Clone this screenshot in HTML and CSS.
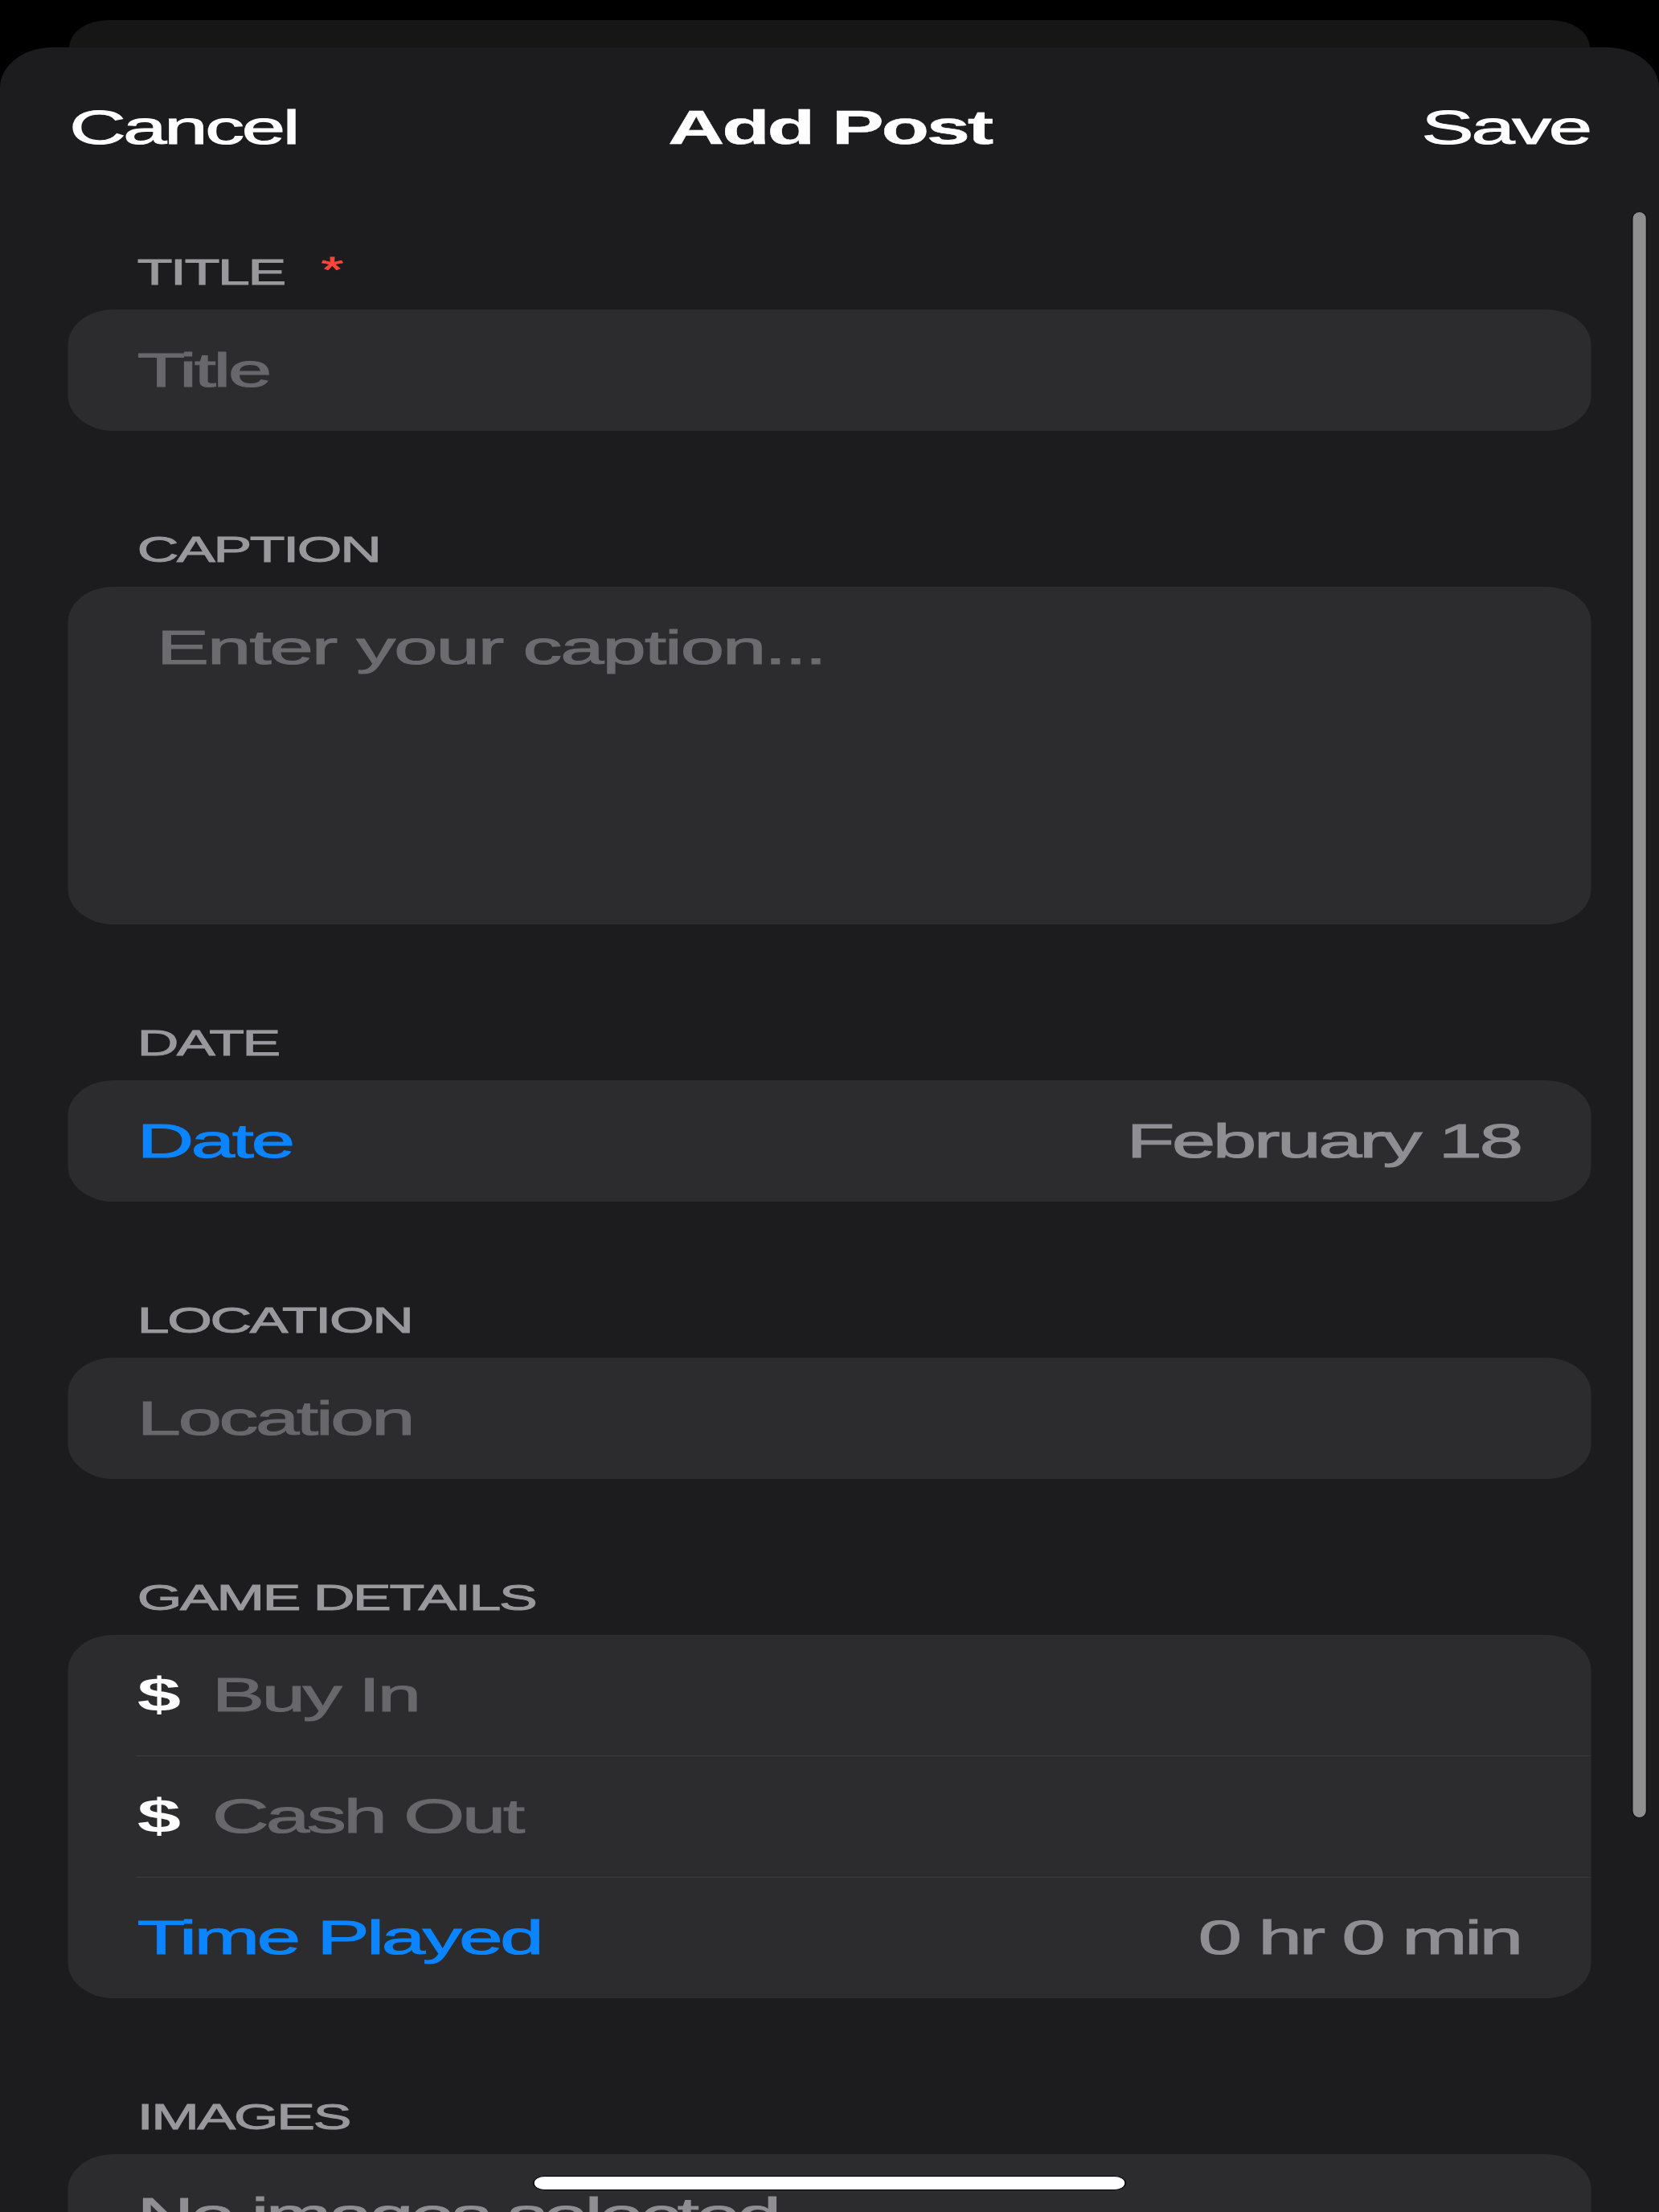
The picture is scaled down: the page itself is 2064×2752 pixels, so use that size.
FILE: index.html
```html
<!DOCTYPE html>
<html lang="en">
<head>
    <meta charset="UTF-8">
    <meta name="viewport" content="width=device-width, initial-scale=1.0">
    <title>Add Post</title>
    <link rel="stylesheet" href="styles.css">
</head>
<body>
    <div class="screen">
        <div class="peek"></div>

        <div class="sheet">
            <header class="nav">
                <span class="nav-btn nav-left">Cancel</span>
                <span class="nav-title">Add Post</span>
                <span class="nav-btn nav-right">Save</span>
            </header>

            <main class="form">
                <section class="group">
                    <div class="group-label">TITLE<span class="required">*</span></div>
                    <div class="field"><span class="placeholder">Title</span></div>
                </section>

                <section class="group">
                    <div class="group-label">CAPTION</div>
                    <div class="field field-caption"><span class="placeholder caption-placeholder">Enter your caption...</span></div>
                </section>

                <section class="group">
                    <div class="group-label">DATE</div>
                    <div class="field field-split">
                        <span class="link">Date</span>
                        <span class="value">February 18</span>
                    </div>
                </section>

                <section class="group">
                    <div class="group-label">LOCATION</div>
                    <div class="field"><span class="placeholder">Location</span></div>
                </section>

                <section class="group">
                    <div class="group-label">GAME DETAILS</div>
                    <div class="rows">
                        <div class="row">
                            <span class="currency">$</span>
                            <span class="placeholder">Buy In</span>
                        </div>
                        <div class="sep"></div>
                        <div class="row">
                            <span class="currency">$</span>
                            <span class="placeholder">Cash Out</span>
                        </div>
                        <div class="sep"></div>
                        <div class="row field-split">
                            <span class="link">Time Played</span>
                            <span class="value">0 hr 0 min</span>
                        </div>
                    </div>
                </section>

                <section class="group">
                    <div class="group-label">IMAGES</div>
                    <div class="field"><span class="value">No images selected</span></div>
                </section>
            </main>
        </div>

        <div class="scroll-thumb"></div>
        <div class="home-bar"></div>
    </div>
</body>
</html>
```

FILE: styles.css
```css
body {
    margin: 0;
    width: 2064px;
    height: 2752px;
    overflow: hidden;
    background-color: #000000;
    font-family: "Liberation Sans", Arial, sans-serif;
}

/* screen is laid out at device width, then stretched to the capture size */
.screen {
    position: relative;
    width: 1270px;
    height: 2752px;
    padding-top: 25px;
    box-sizing: border-box;
    transform: scaleX(1.6252);
    transform-origin: 0 0;
}

.peek {
    height: 34px;
    margin: 0 53px;
    background-color: #161617;
    border-radius: 30px 30px 0 0 / 34px 34px 0 0;
}

.sheet {
    height: 2693px;
    overflow: hidden;
    background-color: #1c1c1e;
    border-radius: 40px 40px 0 0 / 50px 50px 0 0;
}

.nav {
    display: grid;
    grid-template-columns: 1fr auto 1fr;
    align-items: center;
    padding: 70px 53px 0;
    font-size: 60px;
    line-height: 60px;
    letter-spacing: -2px;
    color: #ffffff;
    -webkit-text-stroke: 1px #ffffff;
}

.nav-left {
    justify-self: start;
}

.nav-right {
    justify-self: end;
}

.nav-title {
    font-weight: 700;
    -webkit-text-stroke: 0.4px #ffffff;
}

.form {
    padding: 128px 52px 0;
}

.group + .group {
    margin-top: 126px;
}

.group-label {
    padding-left: 53px;
    margin-bottom: 25px;
    font-size: 44px;
    line-height: 43px;
    letter-spacing: -1.4px;
    color: #98989d;
    -webkit-text-stroke: 1px #98989d;
}

.required {
    position: relative;
    top: -3px;
    margin-left: 28px;
    color: #ff453a;
    -webkit-text-stroke: 0.8px #ff453a;
}

.field {
    height: 151px;
    box-sizing: border-box;
    display: flex;
    align-items: center;
    padding: 0 54px 0 53px;
    background-color: #2c2c2e;
    border-radius: 35px / 44px;
    font-size: 60px;
    line-height: 60px;
    letter-spacing: -2px;
}

.field-caption {
    height: 420px;
    align-items: flex-start;
    padding-top: 46px;
    padding-left: 68px;
}

.field-split {
    justify-content: space-between;
}

.placeholder {
    color: #67676c;
    -webkit-text-stroke: 1.1px #67676c;
}

.caption-placeholder {
    letter-spacing: -1.2px;
    color: #6b6b70;
    -webkit-text-stroke: 1.1px #6b6b70;
}

.link {
    color: #0a84ff;
    -webkit-text-stroke: 1.1px #0a84ff;
}

.value {
    color: #8e8e93;
    -webkit-text-stroke: 1.1px #8e8e93;
}

.rows {
    background-color: #2c2c2e;
    border-radius: 35px / 44px;
    font-size: 60px;
    line-height: 60px;
    letter-spacing: -2px;
}

.row {
    height: 150px;
    display: flex;
    align-items: center;
    padding: 0 54px 0 53px;
}

.sep {
    height: 1px;
    margin-left: 52px;
    background-color: #3a3a3d;
}

.currency {
    margin-right: 26px;
    font-weight: 700;
    color: #ffffff;
}

.scroll-thumb {
    position: absolute;
    top: 263px;
    left: 1249px;
    width: 12px;
    height: 1999px;
    box-sizing: border-box;
    background-color: #8f8f8f;
    border: 1px solid #111111;
    border-radius: 6px / 9px;
}

.home-bar {
    position: absolute;
    top: 2707px;
    left: 408px;
    width: 454px;
    height: 18px;
    box-sizing: border-box;
    background-color: #ffffff;
    border: 1px solid #000000;
    border-radius: 9px;
}
```
